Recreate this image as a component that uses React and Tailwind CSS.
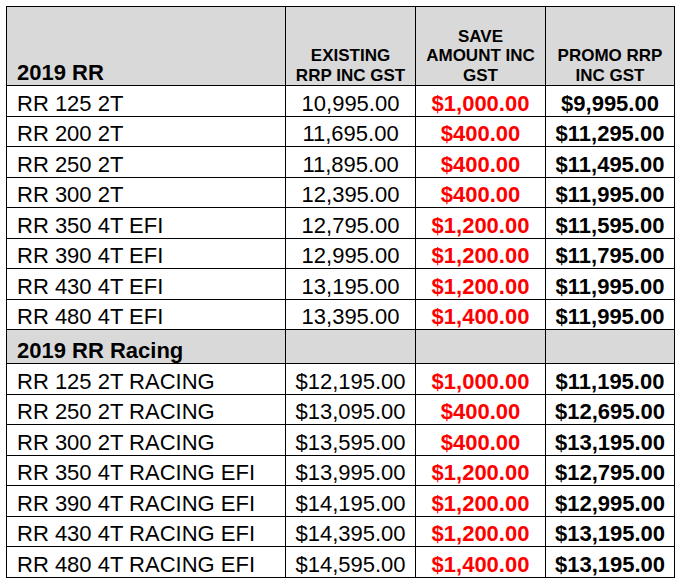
import React from "react";

const RR_ROWS = [
  ["RR 125 2T", "10,995.00", "$1,000.00", "$9,995.00"],
  ["RR 200 2T", "11,695.00", "$400.00", "$11,295.00"],
  ["RR 250 2T", "11,895.00", "$400.00", "$11,495.00"],
  ["RR 300 2T", "12,395.00", "$400.00", "$11,995.00"],
  ["RR 350 4T EFI", "12,795.00", "$1,200.00", "$11,595.00"],
  ["RR 390 4T EFI", "12,995.00", "$1,200.00", "$11,795.00"],
  ["RR 430 4T EFI", "13,195.00", "$1,200.00", "$11,995.00"],
  ["RR 480 4T EFI", "13,395.00", "$1,400.00", "$11,995.00"],
];

const RACING_ROWS = [
  ["RR 125 2T RACING", "$12,195.00", "$1,000.00", "$11,195.00"],
  ["RR 250 2T RACING", "$13,095.00", "$400.00", "$12,695.00"],
  ["RR 300 2T RACING", "$13,595.00", "$400.00", "$13,195.00"],
  ["RR 350 4T RACING EFI", "$13,995.00", "$1,200.00", "$12,795.00"],
  ["RR 390 4T RACING EFI", "$14,195.00", "$1,200.00", "$12,995.00"],
  ["RR 430 4T RACING EFI", "$14,395.00", "$1,200.00", "$13,195.00"],
  ["RR 480 4T RACING EFI", "$14,595.00", "$1,400.00", "$13,195.00"],
];

const cell = "border border-black align-bottom leading-[25px] pb-0";
const head = "border border-black pb-0 align-bottom text-center text-[17px] font-bold leading-[19.5px]";

function PriceRow({ row }) {
  const [model, existing, save, promo] = row;
  return (
    <tr className="h-[30.5px]">
      <td className={`${cell} pl-[10px] text-left`}>{model}</td>
      <td className={`${cell} text-center`}>{existing}</td>
      <td className={`${cell} text-center font-bold text-[#ff0000]`}>{save}</td>
      <td className={`${cell} text-center font-bold`}>{promo}</td>
    </tr>
  );
}

export default function App() {
  return (
    <div className="min-h-[584px] bg-white p-[6px] text-black" style={{ fontFamily: '"Liberation Sans", Arial, sans-serif' }}>
      <table className="w-[668px] table-fixed border-collapse border border-black text-[22px]">
        <colgroup>
          <col className="w-[279px]" />
          <col className="w-[130px]" />
          <col className="w-[130px]" />
          <col className="w-[129px]" />
        </colgroup>
        <thead>
          <tr className="h-[79px] bg-[#d9d9d9]">
            <th className={`${cell} pl-[10px] text-left font-bold`}>2019 RR</th>
            <th className={head}>
              EXISTING<br />RRP INC GST
            </th>
            <th className={head}>
              SAVE<br />AMOUNT INC<br />GST
            </th>
            <th className={head}>
              PROMO RRP<br />INC GST
            </th>
          </tr>
        </thead>
        <tbody>
          {RR_ROWS.map((row) => (
            <PriceRow key={row[0]} row={row} />
          ))}
          <tr className="h-[34px] bg-[#d9d9d9]">
            <td className={`${cell} pl-[10px] text-left font-bold`}>2019 RR Racing</td>
            <td className={cell}></td>
            <td className={cell}></td>
            <td className={cell}></td>
          </tr>
          {RACING_ROWS.map((row) => (
            <PriceRow key={row[0]} row={row} />
          ))}
        </tbody>
      </table>
    </div>
  );
}
